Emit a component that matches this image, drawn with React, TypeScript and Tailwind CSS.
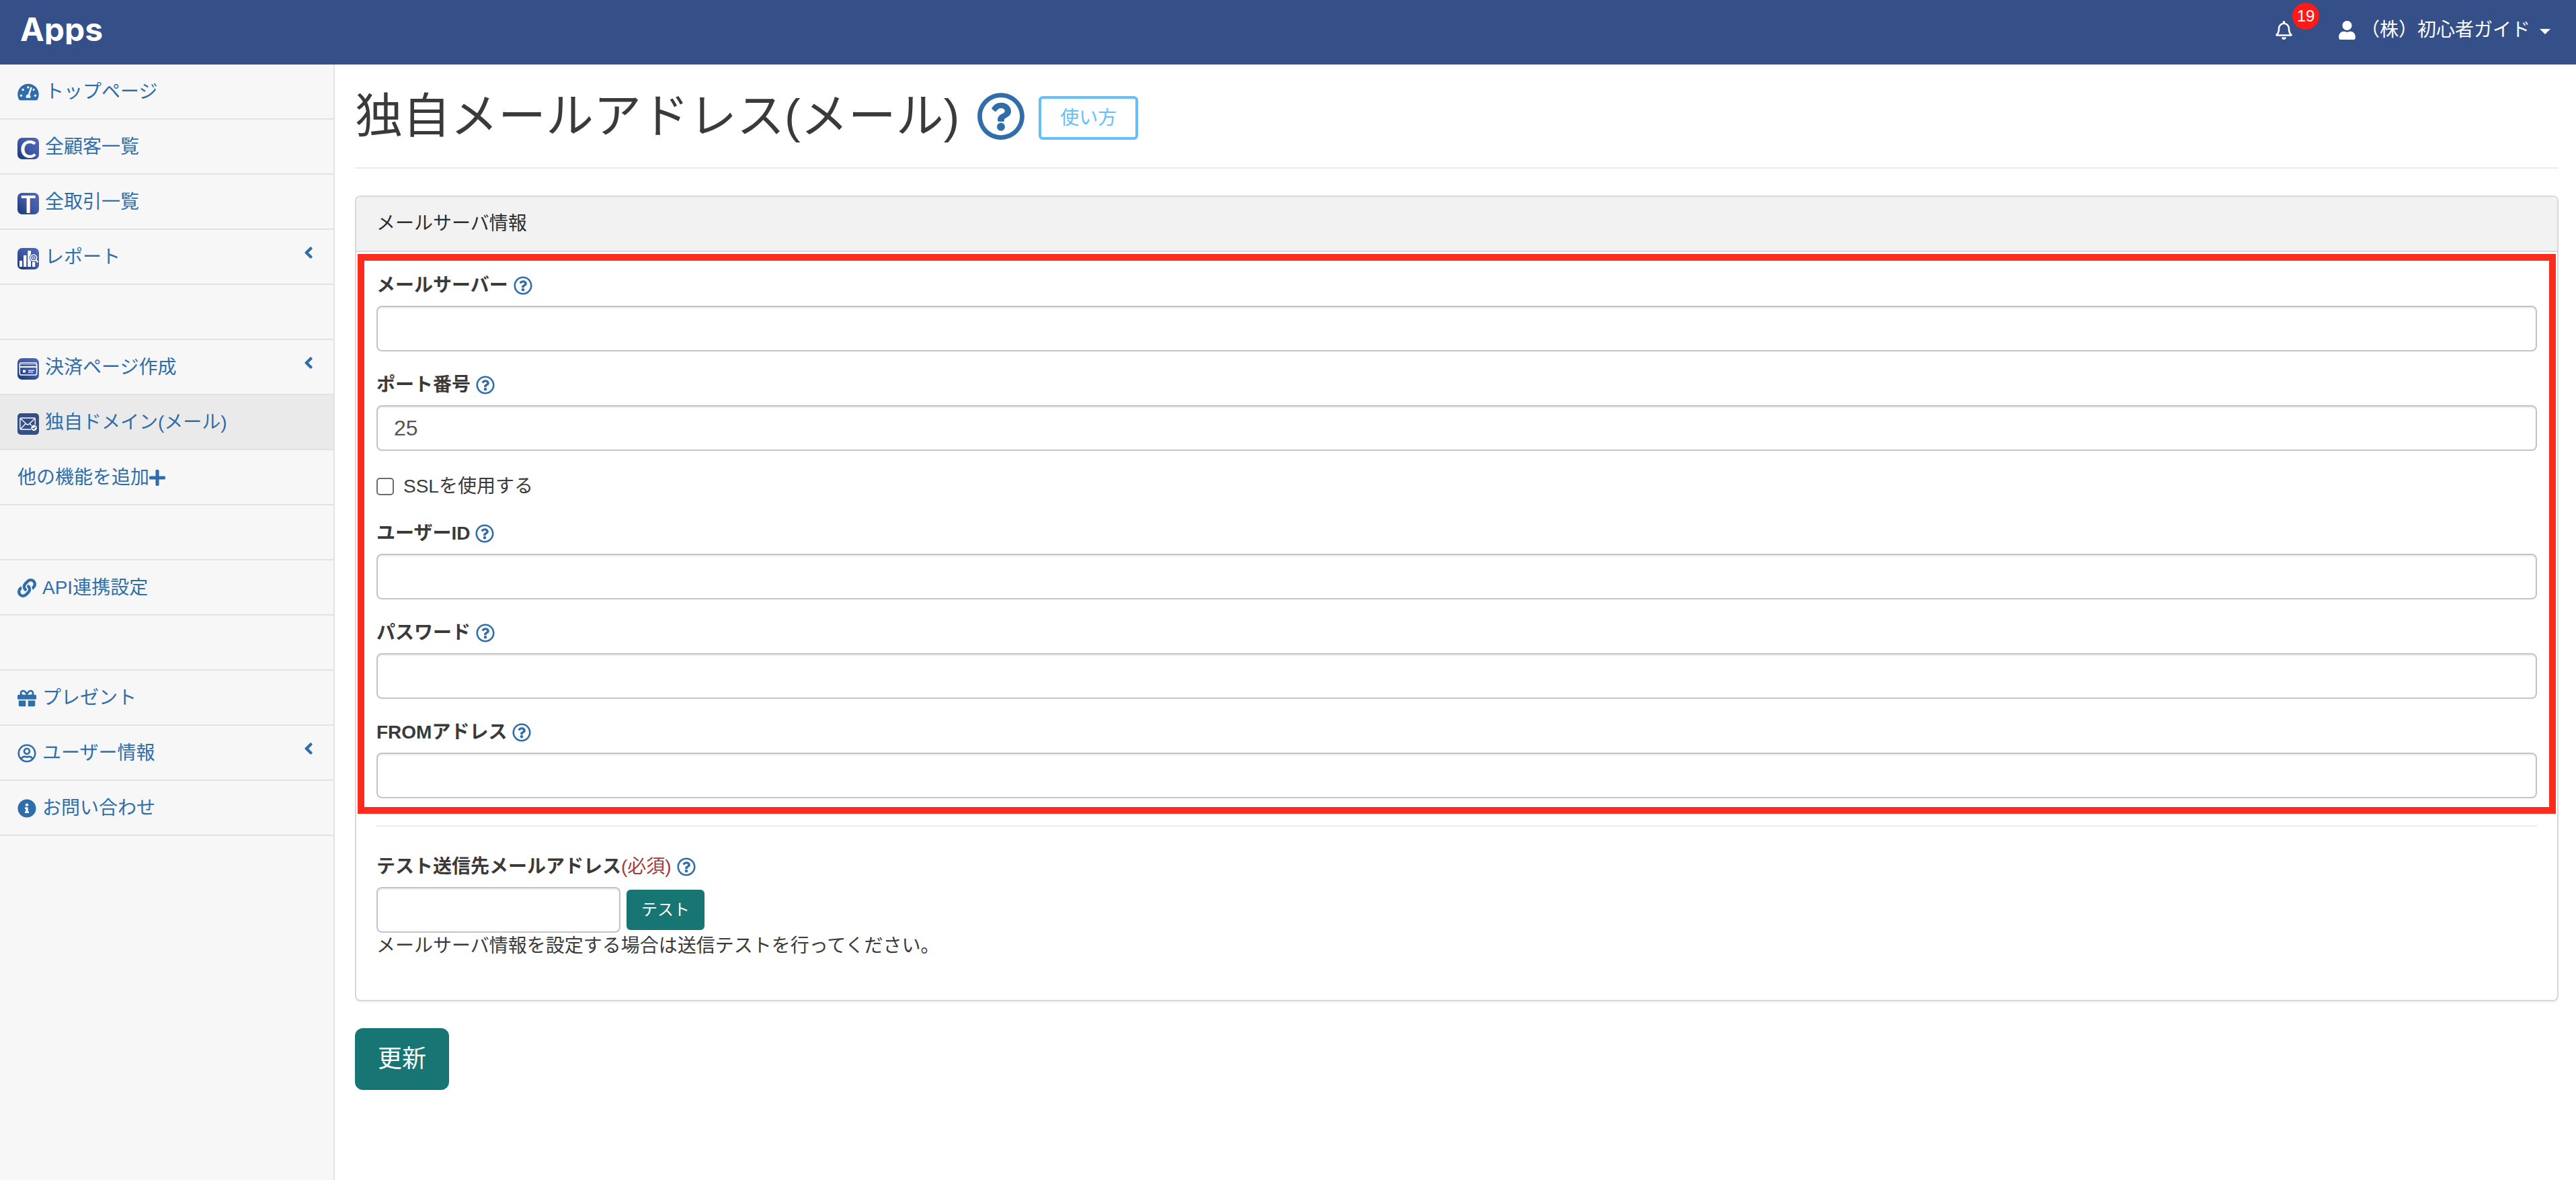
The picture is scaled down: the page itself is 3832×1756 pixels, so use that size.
import { useState } from 'react';
import type { ReactNode } from 'react';
import {
  FaAngleLeft,
  FaGift,
  FaInfoCircle,
  FaLink,
  FaPlus,
  FaRegBell,
  FaRegQuestionCircle,
  FaRegUserCircle,
  FaTachometerAlt,
  FaUser
} from 'react-icons/fa';

function LetterIcon({ letter }: { letter: string }) {
  return (
    <span
      aria-hidden="true"
      className="mt-1 flex h-8 w-8 shrink-0 items-center justify-center rounded-[7px] bg-linear-to-bl from-[#5068c0] via-[#3f58a6] to-[#1b3672] font-['Lato',sans-serif] text-[36px] leading-8 font-bold text-white"
    >
      {letter}
    </span>
  );
}

function AppGradient({ id }: { id: string }) {
  return (
    <defs>
      <linearGradient id={id} x1="1" y1="0" x2="0" y2="1">
        <stop offset="0" stopColor="#5068c0" />
        <stop offset="0.5" stopColor="#3f58a6" />
        <stop offset="1" stopColor="#1b3672" />
      </linearGradient>
    </defs>
  );
}

function ReportIcon() {
  return (
    <svg className="mt-1 h-8 w-8 shrink-0" viewBox="0 0 32 32" fill="none">
      <AppGradient id="report-bg" />
      <rect width="32" height="32" rx="7" fill="url(#report-bg)" />
      <path d="M3 19h4v9H3zM9 11h4.3v17H9zM15.3 4H20v24h-4.7zM22 21h4.3v7H22z" fill="#fff" />
      <circle cx="24" cy="14.6" r="6.4" fill="#4059a8" />
      <circle cx="24" cy="14.6" r="4.6" stroke="#fff" strokeWidth="1.7" />
      <circle cx="24" cy="14.6" r="1.9" stroke="#fff" strokeWidth="1.1" />
      <path d="M27.4 18l3.2 3.2" stroke="#fff" strokeWidth="2.2" />
    </svg>
  );
}

function CardIcon() {
  return (
    <svg className="mt-1 h-8 w-8 shrink-0" viewBox="0 0 32 32" fill="none">
      <AppGradient id="card-bg" />
      <rect width="32" height="32" rx="7" fill="url(#card-bg)" />
      <rect x="3.3" y="7" width="25.4" height="18" rx="2.6" stroke="#fff" strokeWidth="1.5" />
      <path d="M3.5 9.4h25" stroke="#fff" strokeOpacity="0.6" strokeWidth="0.9" />
      <path d="M3.5 13h25" stroke="#fff" strokeWidth="2" />
      <rect x="8" y="17.6" width="4" height="3.8" fill="#fff" />
      <path d="M16 18.4h8.8M16 20.9h7" stroke="#fff" strokeWidth="1.1" />
    </svg>
  );
}

function MailIcon() {
  return (
    <svg className="mt-1 h-8 w-8 shrink-0" viewBox="0 0 32 32" fill="none">
      <rect width="32" height="32" rx="5" fill="#344e87" />
      <rect x="3.9" y="7" width="22.4" height="17" rx="1.6" stroke="#fff" strokeWidth="1.4" />
      <path
        d="M4.5 7.8l9.2 8.6q1.5 1.2 3 0l9.2-8.6M4.5 23.4l7.6-8M25.8 23.4l-7.6-8"
        stroke="#fff"
        strokeWidth="1.4"
      />
      <circle cx="24.6" cy="21.8" r="5.2" fill="#344e87" />
      <circle cx="24.6" cy="21.8" r="4.3" fill="#fff" />
      <path d="M22.4 21.8l1.7 1.7 2.8-3.2" stroke="#344e87" strokeWidth="1.3" />
    </svg>
  );
}

type MenuItem = {
  label: string;
  icon?: ReactNode;
  trailing?: ReactNode;
  expandable?: boolean;
  active?: boolean;
};

// null is a blank spacer row between the groups
const menu: (MenuItem | null)[] = [
  { label: 'トップページ', icon: <FaTachometerAlt className="h-7 w-8" /> },
  { label: '全顧客一覧', icon: <LetterIcon letter="C" /> },
  { label: '全取引一覧', icon: <LetterIcon letter="T" /> },
  { label: 'レポート', icon: <ReportIcon />, expandable: true },
  null,
  { label: '決済ページ作成', icon: <CardIcon />, expandable: true },
  { label: '独自ドメイン(メール)', icon: <MailIcon />, active: true },
  { label: '他の機能を追加', trailing: <FaPlus className="h-7 w-6" /> },
  null,
  { label: 'API連携設定', icon: <FaLink className="h-7 w-7" /> },
  null,
  { label: 'プレゼント', icon: <FaGift className="h-7 w-7" /> },
  { label: 'ユーザー情報', icon: <FaRegUserCircle className="h-7 w-7" />, expandable: true },
  { label: 'お問い合わせ', icon: <FaInfoCircle className="h-7 w-7" /> }
];

function Sidebar() {
  return (
    <nav className="w-[498px] shrink-0 border-r-2 border-[#e2e2e2] bg-[#f7f7f7]">
      <ul>
        {menu.map((item, index) => (
          <li key={index} className="h-[82px] border-b-2 border-[#e2e2e2]">
            {item && (
              <a
                href="#"
                className={`flex h-20 items-center pt-[2px] pr-[30px] pl-[26px] text-[#2f6eab] ${
                  item.active ? 'bg-[#eaeaea]' : ''
                }`}
              >
                {item.icon && <span className="mr-[9px] flex">{item.icon}</span>}
                <span>{item.label}</span>
                {item.trailing}
                {item.expandable && <FaAngleLeft className="mt-[18px] ml-auto h-7 w-[14px] self-start" />}
              </a>
            )}
          </li>
        ))}
      </ul>
    </nav>
  );
}

function Header() {
  return (
    <header className="flex h-24 items-start justify-between bg-[#354f88] pr-[38px] pl-[30px] text-white">
      {/* the wordmark's descenders are cropped on purpose */}
      <a
        href="#"
        className="h-[66px] overflow-hidden font-['Inter',sans-serif] text-[48px] leading-[88px] font-bold"
      >
        Apps
      </a>
      <div className="flex h-[90px] items-center">
        <button type="button" aria-label="通知" className="relative mr-[69px]">
          <FaRegBell className="h-7 w-[25px]" />
          <span className="absolute -top-[27px] left-[25px] flex h-10 w-10 items-center justify-center rounded-full bg-[#ff1a1a] text-2xl">
            19
          </span>
        </button>
        <button type="button" className="flex items-center">
          <FaUser className="mr-2 h-7 w-[25px]" />
          <span>（株）初心者ガイド</span>
          <svg className="mt-1 ml-[14px] h-2 w-4" viewBox="0 0 16 8" fill="currentColor">
            <path d="M0 0h16L8 8z" />
          </svg>
        </button>
      </div>
    </header>
  );
}

function HelpLink({ name }: { name: string }) {
  return (
    <a href="#" aria-label={`${name}のヘルプ`} className="text-[#2f6eab]">
      <FaRegQuestionCircle className="h-7 w-7" />
    </a>
  );
}

const inputClass =
  'block h-[68px] rounded-lg border-2 border-[#c4c4c4] bg-white px-6 text-[32px] text-[#555] shadow-[inset_0_2px_2px_rgba(0,0,0,0.075)] outline-none';

function Field({ id, label, type = 'text', value = '' }: { id: string; label: string; type?: string; value?: string }) {
  const [current, setCurrent] = useState(value);

  return (
    <div className="mb-[30px]">
      <div className="mb-[10px] flex items-center gap-2">
        <label htmlFor={id} className="font-bold">
          {label}
        </label>
        <HelpLink name={label} />
      </div>
      <input
        id={id}
        type={type}
        value={current}
        onChange={(e) => setCurrent(e.target.value)}
        className={`${inputClass} w-full`}
      />
    </div>
  );
}

export default function App() {
  return (
    <div className="flex min-h-screen flex-col bg-white font-['Liberation_Sans','Noto_Sans_CJK_JP',sans-serif] text-[28px] leading-10 text-[#3a3a3a]">
      <Header />
      <div className="flex flex-1">
        <Sidebar />
        <main className="min-w-0 flex-1 pr-[26px] pb-10 pl-[30px]">
          <div className="mb-10 flex h-[155px] items-center border-b-2 border-[#ebebeb]">
            <h1 className="text-[71px] leading-20">独自メールアドレス(メール)</h1>
            <a href="#" aria-label="独自メールアドレスのヘルプ" className="ml-[26px] text-[#2f6eab]">
              <FaRegQuestionCircle className="h-[72px] w-[72px]" />
            </a>
            <a
              href="#"
              className="mt-[6px] ml-5 flex h-[65px] w-[148px] items-center justify-center rounded-md border-4 border-[#63c0ff] text-[#63c0ff]"
            >
              使い方
            </a>
          </div>

          <form onSubmit={(e) => e.preventDefault()}>
            <section className="mb-10 rounded-lg border-2 border-[#d8d8d8] shadow-[0_2px_2px_rgba(0,0,0,0.05)]">
              <h2 className="rounded-t-md border-b-2 border-[#d8d8d8] bg-[#f2f2f2] px-[30px] py-5 text-[#2c2c2c]">
                メールサーバ情報
              </h2>

              <div className="mx-[2px] mt-[3px] border-10 border-[#fb2c1b] px-[18px] pt-[17px] pb-[13px]">
                <Field id="server" label="メールサーバー" />
                <Field id="port" label="ポート番号" value="25" />
                <div className="mb-[30px] flex h-[43px] items-end">
                  <label className="flex items-center gap-[14px]">
                    <input
                      type="checkbox"
                      className="h-[26px] w-[26px] appearance-none rounded-[5px] border-2 border-[#6b6b6b] bg-white checked:bg-[#2f6eab]"
                    />
                    SSLを使用する
                  </label>
                </div>
                <Field id="user" label="ユーザーID" />
                <Field id="password" label="パスワード" type="password" />
                <div className="-mb-[30px]">
                  <Field id="from" label="FROMアドレス" />
                </div>
              </div>

              <hr className="mx-[30px] mt-[17px] mb-10 border-t-2 border-[#ebebeb]" />

              <div className="px-[30px] pb-[60px]">
                <div className="mb-[10px] flex items-center gap-2">
                  <label htmlFor="test-address" className="font-bold">
                    テスト送信先メールアドレス<span className="font-normal text-[#a03c3a]">(必須)</span>
                  </label>
                  <HelpLink name="テスト送信先メールアドレス" />
                </div>
                <div className="flex items-center gap-[9px]">
                  <input id="test-address" type="text" className={`${inputClass} w-[363px]`} />
                  <button type="button" className="h-[60px] rounded-md bg-[#177573] px-[22px] text-2xl text-white">
                    テスト
                  </button>
                </div>
                <p>メールサーバ情報を設定する場合は送信テストを行ってください。</p>
              </div>
            </section>

            <button type="submit" className="h-[92px] rounded-xl bg-[#177573] px-[34px] text-4xl text-white">
              更新
            </button>
          </form>
        </main>
      </div>
    </div>
  );
}
